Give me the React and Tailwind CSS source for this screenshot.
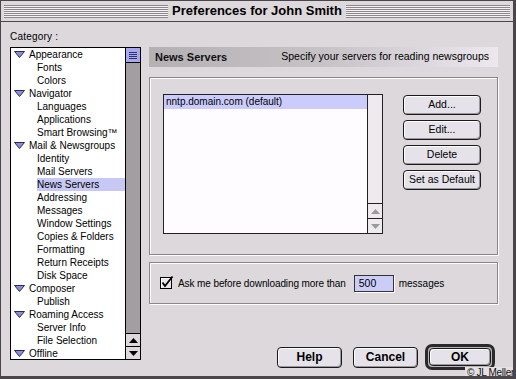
const categories = [
  { label: 'Appearance', parent: true },
  { label: 'Fonts' },
  { label: 'Colors' },
  { label: 'Navigator', parent: true },
  { label: 'Languages' },
  { label: 'Applications' },
  { label: 'Smart Browsing™' },
  { label: 'Mail & Newsgroups', parent: true },
  { label: 'Identity' },
  { label: 'Mail Servers' },
  { label: 'News Servers', selected: true },
  { label: 'Addressing' },
  { label: 'Messages' },
  { label: 'Window Settings' },
  { label: 'Copies & Folders' },
  { label: 'Formatting' },
  { label: 'Return Receipts' },
  { label: 'Disk Space' },
  { label: 'Composer', parent: true },
  { label: 'Publish' },
  { label: 'Roaming Access', parent: true },
  { label: 'Server Info' },
  { label: 'File Selection' },
  { label: 'Offline', parent: true },
];

const Disclosure = () => (
  <svg width="11" height="7" viewBox="0 0 11 7">
    <polygon points="0.5,0.5 10.5,0.5 5.5,6.5" fill="#8c8cd8" stroke="#2a2a50" strokeWidth="1" />
  </svg>
);

const Arrow = ({ up, color = '#000' }) => (
  <svg width="9" height="5" viewBox="0 0 9 5">
    {up ? <polygon points="0,5 4.5,0 9,5" fill={color} /> : <polygon points="0,0 9,0 4.5,5" fill={color} />}
  </svg>
);

const Button = ({ children, className = '' }) => (
  <div
    className={`flex items-center justify-center rounded-[4px] border border-[#1a1a1a] bg-[#e6e2ea] shadow-[inset_1px_1px_0_#ffffff,inset_-1px_-1px_0_#9a969e] text-black ${className}`}
  >
    {children}
  </div>
);

const GroupBox = ({ children, className = '' }) => (
  <div className={`border border-[#8a868a] shadow-[inset_1px_1px_0_#ffffff,1px_1px_0_#ffffff] ${className}`}>
    {children}
  </div>
);

export default function App() {
  return (
    <div className="relative flex h-[379px] w-[516px] flex-col overflow-hidden border-t border-l border-r-[3px] border-b-[3px] border-[#4a464a] bg-[#dcd8dc] font-['Liberation_Sans',Arial,sans-serif] text-black">
      {/* Title bar */}
      <div className="flex h-[21px] items-center border-b border-[#4a464a] px-[3px]">
        <div className="h-[13px] flex-1 bg-[repeating-linear-gradient(to_bottom,#8c888c_0px,#8c888c_1px,#f4f0f4_1px,#f4f0f4_2px)]" />
        <div className="px-[4px] text-[13px] font-bold leading-[16px]">Preferences for John Smith</div>
        <div className="h-[13px] flex-1 bg-[repeating-linear-gradient(to_bottom,#8c888c_0px,#8c888c_1px,#f4f0f4_1px,#f4f0f4_2px)]" />
      </div>

      <div className="flex flex-1 gap-[8px] pl-[9px] pt-[9px]">
        {/* Category tree */}
        <div className="flex w-[131px] flex-col">
          <div className="h-[16px] text-[10px] leading-[12px] tracking-[0.2px]">Category :</div>
          <div className="flex h-[313px] border border-black bg-white">
            <div className="flex flex-1 flex-col overflow-hidden text-[10px]">
              {categories.map((c) =>
                c.parent ? (
                  <div key={c.label} className="flex h-[13px] shrink-0 items-center gap-[4px] pl-[3px] leading-[13px]">
                    <Disclosure />
                    <span>{c.label}</span>
                  </div>
                ) : (
                  <div key={c.label} className="flex h-[13px] shrink-0 pl-[26px] leading-[13px]">
                    <div className={`flex-1 ${c.selected ? 'bg-[#c8c8f4]' : ''}`}>{c.label}</div>
                  </div>
                )
              )}
            </div>
            <div className="flex w-[15px] flex-col border-l border-black">
              <div className="flex h-[15px] items-center justify-center border-b border-black bg-[#a8a8ec]">
                <svg width="8" height="7" viewBox="0 0 8 7">
                  <path d="M0 0.5H8M0 2.5H8M0 4.5H8M0 6.5H8" stroke="#303070" strokeWidth="1" />
                </svg>
              </div>
              <div className="flex-1 bg-[#a29ea2]" />
              <div className="flex h-[13px] items-center justify-center border-t border-black bg-[#dcd8dc]">
                <Arrow up />
              </div>
              <div className="flex h-[13px] items-center justify-center border-t border-black bg-[#dcd8dc]">
                <Arrow />
              </div>
            </div>
          </div>
        </div>

        {/* Right panel */}
        <div className="flex w-[349px] flex-col pt-[16px]">
          <div className="flex h-[20px] items-center bg-linear-to-r from-[#b4b0b4] via-[#c6c2c6] to-[#ece8ee] pl-[6px] pr-[9px]">
            <span className="text-[11px] font-bold text-[#111]">News Servers</span>
            <span className="ml-auto text-[10.5px]">Specify your servers for reading newsgroups</span>
          </div>

          <GroupBox className="mt-[10px] flex h-[178px] gap-[20px] pl-[13px] pt-[16px]">
            <div className="flex h-[140px] w-[220px] border border-[#222] bg-[#fffcff]">
              <div className="flex-1">
                <div className="h-[14px] bg-[#ccccfc] pl-[2px] text-[10px] leading-[14px]">nntp.domain.com (default)</div>
              </div>
              <div className="flex w-[15px] flex-col justify-end border-l border-[#222] bg-[#eeeaee]">
                <div className="flex h-[15px] items-center justify-center border-t border-[#222]">
                  <Arrow up color="#9a9a9a" />
                </div>
                <div className="flex h-[15px] items-center justify-center border-t border-[#222]">
                  <Arrow color="#9a9a9a" />
                </div>
              </div>
            </div>
            <div className="mt-[1px] flex flex-col gap-[5px] text-[10.5px]">
              <Button className="h-[20px] w-[78px]">Add...</Button>
              <Button className="h-[20px] w-[78px]">Edit...</Button>
              <Button className="h-[20px] w-[78px]">Delete</Button>
              <Button className="h-[20px] w-[78px]">Set as Default</Button>
            </div>
          </GroupBox>

          <GroupBox className="mt-[7px] flex h-[42px] items-center pl-[10px] text-[10px]">
            <svg width="14" height="14" viewBox="0 0 14 14" className="mt-[-2px]">
              <rect x="0.5" y="2.5" width="11" height="11" fill="#e8e6e8" stroke="#000" />
              <path d="M1.5 12.5V3.5H10.5" stroke="#ffffff" fill="none" />
              <path d="M2.5 7.5L5 11L12.5 1.5" stroke="#000" strokeWidth="1.8" fill="none" />
            </svg>
            <span className="ml-[4px] tracking-[-0.1px]">Ask me before downloading more than</span>
            <div className="ml-[8px] h-[17px] w-[40px] border border-[#333] bg-[#ccccf8] pl-[4px] text-[10.5px] leading-[15px] shadow-[1px_1px_0_#ffffff]">
              500
            </div>
            <span className="ml-[5px]">messages</span>
          </GroupBox>

          <div className="mt-[40px] flex items-center justify-end pr-[3px]">
            <Button className="h-[21px] w-[65px] text-[12px] font-bold">Help</Button>
            <Button className="ml-[11px] h-[21px] w-[65px] text-[12px] font-bold">Cancel</Button>
            <div className="ml-[7px] h-[26px] w-[70px] rounded-[7px] border-[3px] border-[#2a2a2a] bg-[#b8b4b8] p-px">
              <Button className="h-full w-full text-[12px] font-bold">OK</Button>
            </div>
          </div>
        </div>
      </div>

      <div className="absolute -bottom-[3px] -right-[3px] bg-[#e4e0e4] px-[2px] text-[10px] leading-[12px] tracking-[-0.3px] text-[#111]">
        © JL Meller
      </div>
    </div>
  );
}
